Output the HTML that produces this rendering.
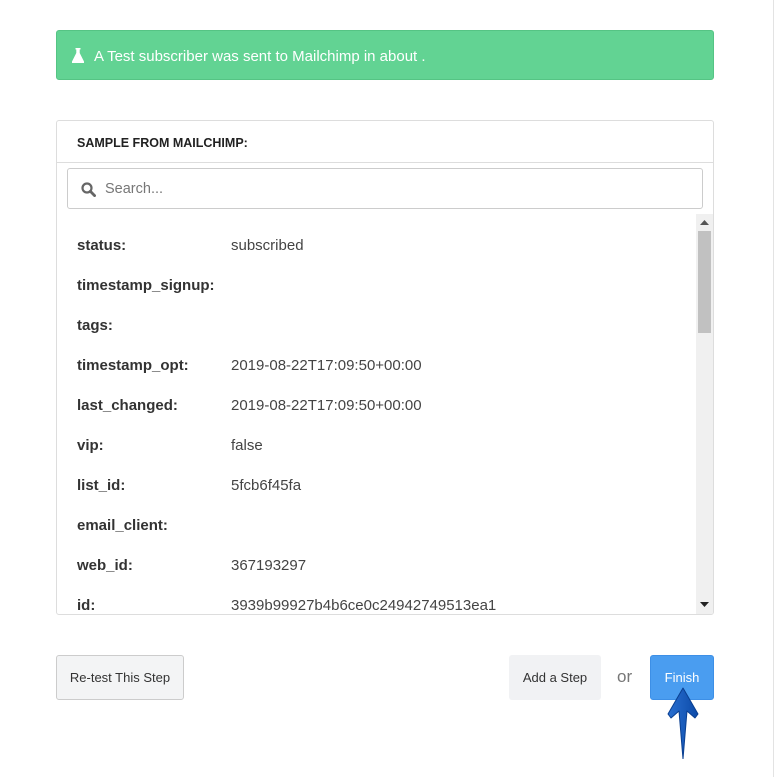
<!DOCTYPE html>
<html><head><style>
*{box-sizing:border-box}
body{margin:0;width:775px;height:777px;background:#fff;font-family:"Liberation Sans",sans-serif;position:relative;overflow:hidden}
.edge{position:absolute;left:773px;top:0;width:1px;height:777px;background:#e3e3e3}
.alert{position:absolute;left:56px;top:30px;width:658px;height:50px;background:#62d393;border:1px solid #55c484;border-radius:3px;color:#fff;font-size:15px;line-height:50px}
.alert span{position:absolute;left:37px}
.panel{position:absolute;left:56px;top:120px;width:658px;height:495px;border:1px solid #ddd;border-radius:3px;overflow:hidden}
.hdr{height:42px;border-bottom:1px solid #ddd;font-size:12.5px;font-weight:bold;color:#222;line-height:44px;padding-left:20px}
.search{position:absolute;left:10px;top:47px;width:636px;height:41px;border:1px solid #ccc;border-radius:3px;color:#777;font-size:14.5px;line-height:41px}
.search span{position:absolute;left:37px}
.row{position:absolute;left:20px;font-size:15px;color:#333}
.row b{position:absolute;left:0;white-space:nowrap;color:#333}
.row i{font-style:normal;position:absolute;left:154px;white-space:nowrap;color:#444}
.sb{position:absolute;left:639px;top:93px;width:17px;height:400px;background:#f0f0f0}
.thumb{position:absolute;left:2px;top:17px;width:13px;height:102px;background:#c1c1c1}
.btn{position:absolute;top:655px;height:45px;border-radius:3px;font-size:13px;line-height:43px;text-align:center}
</style></head><body>
<div class="edge"></div>
<div class="alert"><svg style="position:absolute;left:15px;top:17px" width="12" height="15" viewBox="0 0 12 15"><path d="M3.5 0h5v1.5h-.8v3.5L12 13.5V15H0v-1.5L4.3 5V1.5h-.8z" fill="#fff"/></svg><span style="top:1px">A Test subscriber was sent to Mailchimp in about .</span></div>
<div class="panel">
<div class="hdr">SAMPLE FROM MAILCHIMP:</div>
<div class="search"><svg style="position:absolute;left:13px;top:13px" width="15" height="15" viewBox="0 0 15 15"><circle cx="6" cy="6" r="4.5" fill="none" stroke="#666" stroke-width="2.2"/><path d="M9.3 9.3l4.3 4.3" stroke="#666" stroke-width="2.8" stroke-linecap="round"/></svg><span>Search...</span></div>
<div class="row" style="top:116px"><b>status:</b><i>subscribed</i></div>
<div class="row" style="top:156px"><b>timestamp_signup:</b></div>
<div class="row" style="top:196px"><b>tags:</b></div>
<div class="row" style="top:236px"><b>timestamp_opt:</b><i>2019-08-22T17:09:50+00:00</i></div>
<div class="row" style="top:276px"><b>last_changed:</b><i>2019-08-22T17:09:50+00:00</i></div>
<div class="row" style="top:316px"><b>vip:</b><i>false</i></div>
<div class="row" style="top:356px"><b>list_id:</b><i>5fcb6f45fa</i></div>
<div class="row" style="top:396px"><b>email_client:</b></div>
<div class="row" style="top:436px"><b>web_id:</b><i>367193297</i></div>
<div class="row" style="top:476px"><b>id:</b><i>3939b99927b4b6ce0c24942749513ea1</i></div>
<div class="sb"><svg style="position:absolute;left:4px;top:6px" width="9" height="5"><path d="M0 5L4.5 0 9 5z" fill="#555"/></svg><div class="thumb"></div><svg style="position:absolute;left:4px;top:388px" width="9" height="5"><path d="M0 0L4.5 5 9 0z" fill="#222"/></svg></div>
</div>
<div class="btn" style="left:56px;width:128px;border:1px solid #ccc;background:#f3f4f5;color:#333">Re-test This Step</div>
<div class="btn" style="left:509px;width:92px;background:#f1f2f4;color:#333;line-height:45px">Add a Step</div>
<div style="position:absolute;left:617px;top:667px;font-size:17px;color:#777">or</div>
<div class="btn" style="left:650px;width:64px;background:#4a9df0;border:1px solid #3d8fe6;color:#fff">Finish</div>
<svg style="position:absolute;left:664px;top:687px" width="38" height="72" viewBox="0 0 38 72"><defs><linearGradient id="g" x1="0" x2="1"><stop offset="0" stop-color="#2a6fd0"/><stop offset="1" stop-color="#0b4aa8"/></linearGradient></defs><path d="M19 1L34 27 31 31 23 24 19 72 15 24 7 31 4 27z" fill="url(#g)" stroke="#0a3f90" stroke-width="1" stroke-linejoin="round"/></svg>
</body></html>
